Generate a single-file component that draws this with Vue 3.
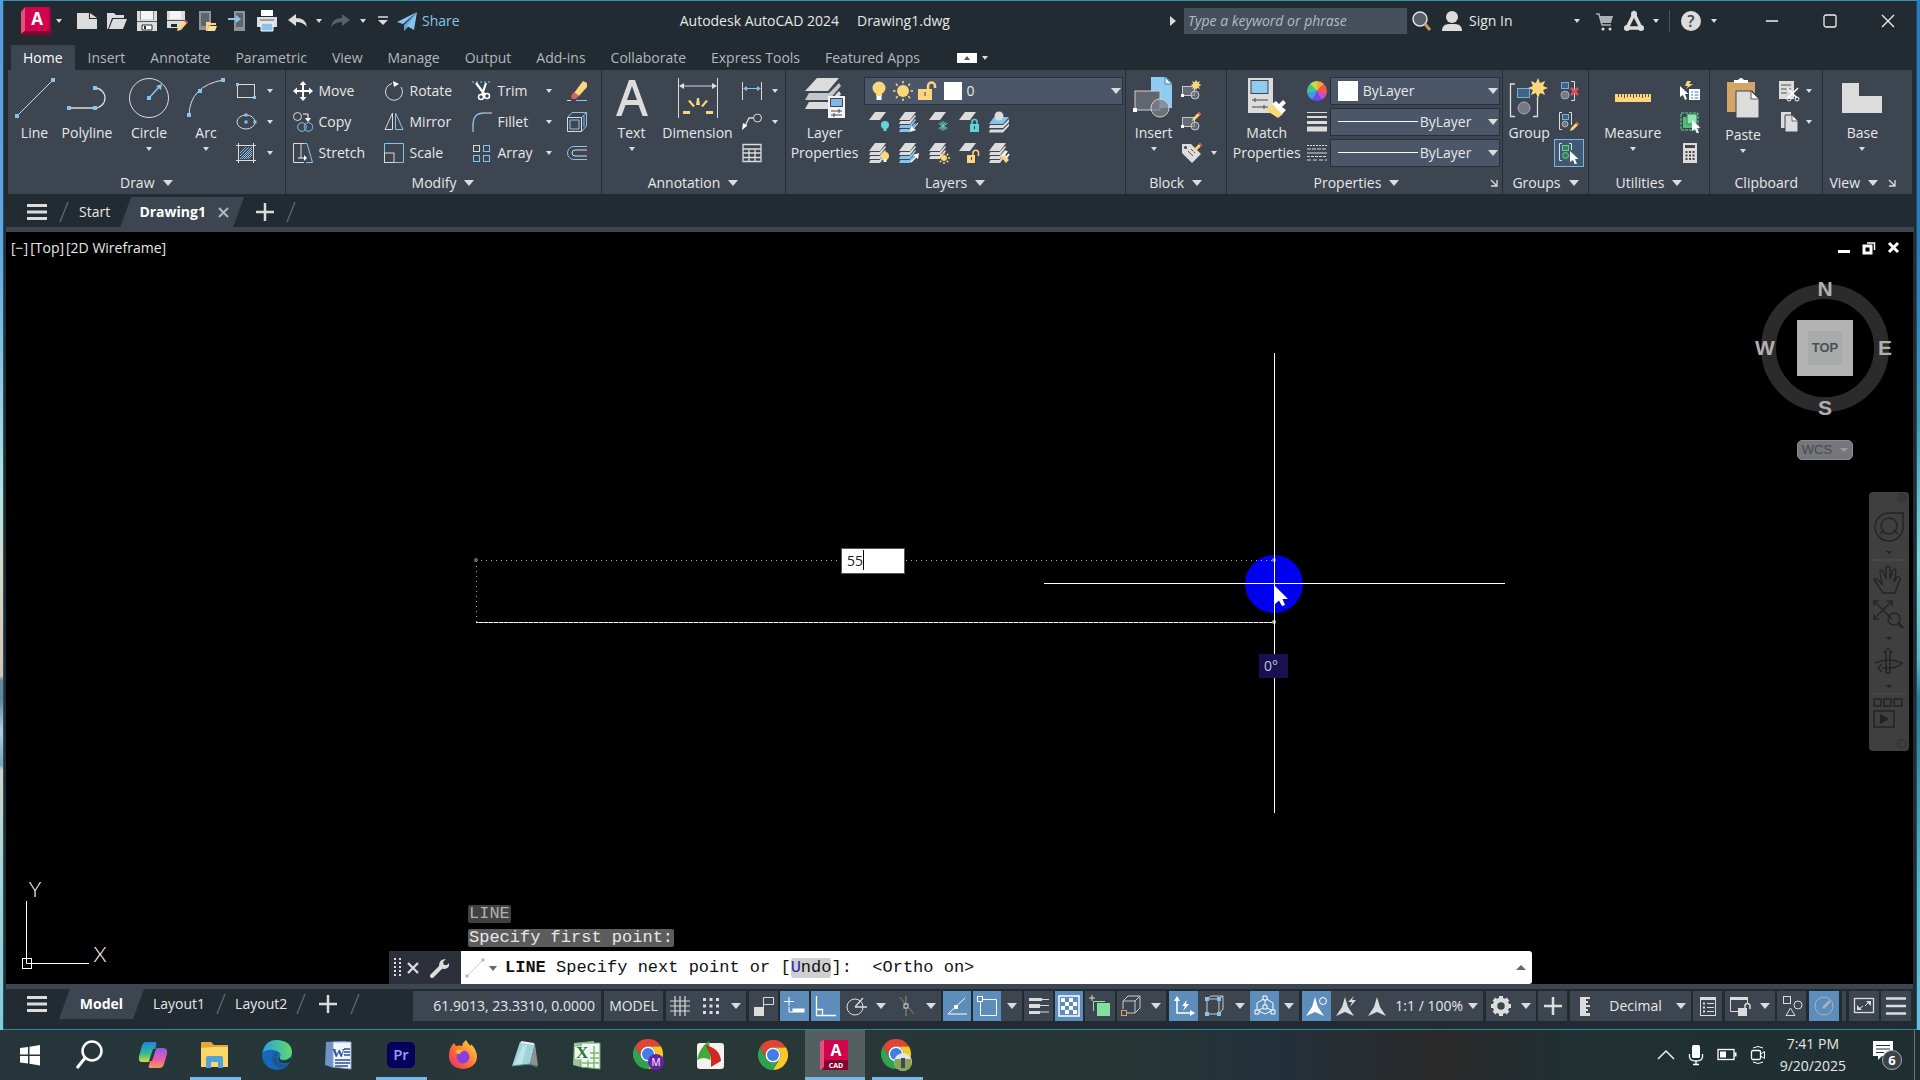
<script setup>
import { h } from 'vue'

const B = '#86c4ee'
const G = '#dcdcdc'
const Y = '#fbd67c'
const sheet = (c = G) => `<path d="M7 1H18L12 9H1Z" fill="${c}"/>`
const band = (y, c = G) => `<path d="M2.5 ${y}H11.5L17 ${y - 6}L18 ${y - 5}L12 ${y + 3}H1Z" fill="${c}"/>`
const dot = (x, y, s = 3) => `<rect x="${x - s / 2}" y="${y - s / 2}" width="${s}" height="${s}" fill="${B}"/>`
const bulb = (x, y, c) => `<circle cx="${x}" cy="${y}" r="4" fill="${c}"/><path d="M${x - 1.5} ${y + 3}h3v3h-3z" fill="${c === Y ? '#fff' : c}"/>`
const pencil = (x, y) => `<path d="M${x} ${y + 9}l1-3 5-5 2 2-5 5z" fill="${Y}"/><path d="M${x + 6} ${y + 1}l1-1 2 2-1 1z" fill="#d9534f" stroke="#d9534f"/>`
const star = (x, y, r, n = 8) => {
  let p = ''
  for (let i = 0; i < n * 2; i++) {
    const a = (Math.PI * i) / n
    const q = i % 2 ? r * 0.55 : r
    p += `${(x + q * Math.sin(a)).toFixed(1)},${(y - q * Math.cos(a)).toFixed(1)} `
  }
  return `<polygon points="${p}" fill="${Y}"/>`
}
const rays = (x, y, a, b) => {
  let p = ''
  for (let i = 0; i < 8; i++) {
    const t = (Math.PI * i) / 4
    p += `M${(x + a * Math.cos(t)).toFixed(1)} ${(y + a * Math.sin(t)).toFixed(1)}L${(x + b * Math.cos(t)).toFixed(1)} ${(y + b * Math.sin(t)).toFixed(1)}`
  }
  return `<path d="${p}" stroke="${Y}" stroke-width="1.5"/>`
}
const arrow = (x, y) => `<path d="M${x} ${y}v11l3-2 2 5 2-1-2-5h3.500z" fill="#fff"/>`
const chrome = `<path d="M2 7.500A15 15 0 0 1 28 7.500H15A7.500 7.500 0 0 0 8.500 18.750Z" fill="#e04437"/><path d="M28 7.500A15 15 0 0 1 15 30L21.500 18.750A7.500 7.500 0 0 0 15 7.500Z" fill="#fbc926"/><path d="M15 30A15 15 0 0 1 2 7.500L8.500 18.750A7.500 7.500 0 0 0 21.500 18.750Z" fill="#2fa350"/><circle cx="15" cy="15" r="7.500" fill="#fff"/><circle cx="15" cy="15" r="6" fill="#3f7de8"/>`
const block = `<rect x="1.500" y="6.500" width="12" height="9" fill="#666c76" stroke="#c9c9c9"/><circle cx="14" cy="15" r="4" fill="#777d86" fill-opacity=".6" stroke="#c9c9c9"/><path d="M0 14h3v3H0z" fill="#fff"/>`
const person = `<path d="M12 2L15 12L21 21L12 17L3 21L9 12Z" fill="${G}"/>`

const icons = {
  caret: [8, 4, `<path d="M1 0H7L4 4Z" fill="${G}"/>`],
  caretW: [8, 4, '<path d="M0 0H8L4 4Z" fill="#9a9aa0"/>'],
  caretL: [10, 6, `<path d="M0 0H10L5 6Z" fill="${G}"/>`],
  caretU: [10, 6, '<path d="M0 5H10L5 0Z" fill="#666"/>'],
  caretD: [8, 5, '<path d="M0 0H8L4 5Z" fill="#666"/>'],
  launch: [8, 8, `<path d="M1 1L6 6M7 1V7H1" stroke="${G}" stroke-width="1.300" fill="none"/>`],
  burger: [20, 16, `<path d="M0 0h20v3H0zM0 6.500h20v3H0zM0 13h20v3H0z" fill="${G}"/>`],
  slash: [10, 22, '<path d="M1 21L9 1" stroke="#5d6873" stroke-width="1.300"/>'],
  plus: [18, 18, `<path d="M9 0V18M0 9H18" stroke="${G}" stroke-width="2.500"/>`],
  x: [11, 11, '<path d="M1 1L10 10M10 1L1 10" stroke="#b4b8bc" stroke-width="2"/>'],
  logo: [30, 28, '<path d="M4 0H28V24H4Z" fill="#d0054c"/><path d="M0 5L4 0V24L0 27Z" fill="#e4517f"/><path d="M0 27L4 24H28L30 28H0Z" fill="#87042f"/><path d="M28 0L30 3V28L28 24Z" fill="#a00540"/><text x="16" y="18" font-family="Open Sans, sans-serif" font-size="17" font-weight="700" fill="#fff" text-anchor="middle">A</text>'],
  newf: [22, 22, `<path d="M1 3H13V9H21V19H1Z" fill="${G}"/><path d="M14 3L21 8H14Z" fill="${G}"/>`],
  open: [22, 22, `<path d="M1 19V3H8L10 5H18V8H6L2 19Z" fill="${G}"/><path d="M7 9H21L17 19H3Z" fill="${G}"/>`],
  save: [22, 22, `<path d="M1 1H21V21H1Z" fill="${G}"/><path d="M5 1H17V9H5Z" fill="#f5f5f5"/><path d="M1 11.500H21" stroke="#555"/><path d="M6 15h10v5H6z" fill="#fff" stroke="#222b31"/><path d="M8 16h2v3H8z" fill="#222b31"/><path d="M4.500 1V10M17.500 1V10" stroke="#888"/>`],
  saveas: [22, 22, `<path d="M1 1H19V12L12 18H1Z" fill="${G}"/><path d="M4 1H15V9H4Z" fill="#f5f5f5"/><path d="M1 10.500H19" stroke="#555"/><path d="M5 14h6v3H5z" fill="#222b31"/><path d="M11 21l1-4 7-6 2 2-6 7z" fill="${Y}"/><path d="M18 11l2-1 2 2-1 2z" fill="#d9534f"/>`],
  openw: [22, 22, `<path d="M3 1H15V20H3Z" fill="#8e959a"/><path d="M5 3H13V16H5Z" fill="#5d656c"/><path d="M10 12h4l1 1h5v2h-7l-2 6h-1z" fill="${Y}"/><path d="M13 16h8l-2 5h-8z" fill="#fbe2a2"/>`],
  savew: [22, 22, `<path d="M8 1H19V21H8Z" fill="#8e959a"/><path d="M10 3H17V17H10Z" fill="#5d656c"/><path d="M2 8H10V5L15 9L10 13V10H2Z" fill="${B}"/>`],
  print: [22, 22, `<path d="M5 0H17V6H5Z" fill="#fff"/><path d="M1 7H21V17H1Z" fill="${G}"/><path d="M4 10H18" stroke="#666"/><path d="M5 13H17V21H5Z" fill="${B}" stroke="#fff"/>`],
  undo: [22, 22, `<path d="M2 10L10 4V8Q20 8 21 17Q17 12 10 12V16Z" fill="${G}"/>`],
  redo: [22, 22, '<path d="M20 10L12 4V8Q2 8 1 17Q5 12 12 12V16Z" fill="#596066"/>'],
  custom: [12, 10, `<path d="M1 1H11" stroke="${G}" stroke-width="1.500"/><path d="M1 4H11L6 9Z" fill="${G}"/>`],
  plane: [22, 22, `<path d="M21 2L1 12L7 14Z" fill="${B}"/><path d="M21 2L8 15V21L12 17Z" fill="#5fa9da"/><path d="M21 2L11 16L18 20Z" fill="${B}"/>`],
  tri: [6, 10, `<path d="M0 0L6 5L0 10Z" fill="${G}"/>`],
  search: [22, 22, '<circle cx="9" cy="9" r="7" fill="#596069" stroke="#e0e0e0" stroke-width="1.500"/><path d="M14 14L19 20" stroke="#c9995f" stroke-width="3"/>'],
  user: [22, 22, `<circle cx="11" cy="7" r="6" fill="${G}"/><path d="M1 21Q1 14 8 14H14Q21 14 21 21Z" fill="${G}"/>`],
  cart: [20, 20, '<path d="M2 3H5L8 14H17" stroke="#aeb2b5" stroke-width="1.500" fill="none"/><path d="M5 5H19L17 12H7Z" fill="#aeb2b5"/><circle cx="9" cy="18" r="1.500" fill="#ddd"/><circle cx="16" cy="18" r="1.500" fill="#ddd"/>'],
  a360: [22, 22, `<path d="M11 4L4 18H18Z" fill="none" stroke="${G}" stroke-width="3.500"/><circle cx="11" cy="4" r="3" fill="${G}"/><circle cx="4" cy="18" r="3" fill="${G}"/><circle cx="18" cy="18" r="3" fill="${G}"/>`],
  help: [22, 22, `<circle cx="11" cy="11" r="10" fill="${G}"/><text x="11" y="17" font-family="Open Sans, sans-serif" font-weight="600" font-size="16" fill="#3a434b" text-anchor="middle">?</text>`],
  min: [14, 14, '<path d="M1 7H13" stroke="#f0f0f0" stroke-width="1.500"/>'],
  max: [14, 14, '<rect x="1" y="1" width="12" height="12" rx="2" fill="none" stroke="#f0f0f0" stroke-width="1.300"/>'],
  close: [14, 14, '<path d="M1 1L13 13M13 1L1 13" stroke="#f0f0f0" stroke-width="1.300"/>'],
  wbox: [20, 10, '<path d="M0 0H20V10H0Z" fill="#fff"/><path d="M7 7H13L10 3Z" fill="#555"/>'],
  // draw
  line: [40, 40, `<path d="M2 38L38 2" stroke="${G}"/>${dot(2, 38, 4)}${dot(38, 2, 4)}`],
  pline: [40, 40, `<path d="M2 30H28A10 10 0 0 0 28 10" fill="none" stroke="${G}" stroke-width="1.300"/>${dot(2, 30, 4)}${dot(28, 30, 4)}${dot(28, 10, 4)}`],
  circle: [40, 40, `<circle cx="20" cy="20" r="19.500" fill="none" stroke="${G}"/><path d="M20 20L30 9" stroke="${B}" stroke-width="1.500"/><path d="M33 6L32 12L27 8Z" fill="${B}"/>${dot(20, 20, 4)}`],
  arc: [40, 40, `<path d="M3 37Q4 8 37 2" fill="none" stroke="${G}"/>${dot(3, 37, 4)}${dot(14, 13, 4)}${dot(37, 2, 4)}`],
  rect: [22, 22, `<rect x="2.500" y="4.500" width="17" height="13" fill="none" stroke="${G}"/>${dot(2.5, 4.5)}${dot(19.5, 17.5)}`],
  ellipse: [22, 22, `<ellipse cx="11" cy="11" rx="9" ry="7" fill="none" stroke="${G}"/>${dot(11, 11)}${dot(11, 4)}${dot(20, 11)}`],
  hatch: [22, 22, `<path d="M3.500 1V21M18.500 1V21M1 3.500H21M1 18.500H21" stroke="${G}"/><path d="M5 11L11 5M5 17L17 5M9 17L17 9M13 17L17 13M5 14L14 5M7 17L17 7M11 17L17 11" stroke="${B}"/>`],
  // modify
  move: [20, 20, '<path d="M10 0L13.500 4H11V9H16V6.500L20 10L16 13.500V11H11V16H13.500L10 20L6.500 16H9V11H4V13.500L0 10L4 6.500V9H9V4H6.500Z" fill="#fff"/>'],
  copy: [20, 20, `<circle cx="4.500" cy="4.500" r="4" fill="none" stroke="${G}"/><path d="M10 2h5v5" fill="none" stroke="#fff"/><path d="M12 6h6l-3 4z" fill="#fff"/><circle cx="9" cy="15" r="4.300" fill="none" stroke="${B}"/><circle cx="15.500" cy="15" r="4.300" fill="none" stroke="${B}"/>`],
  stretch: [20, 20, `<path d="M11 .500H.500V19.500H11M8 .500V15" fill="none" stroke="${G}"/><path d="M11 .500H14L19.500 19.500H13" fill="none" stroke="${B}"/><path d="M5 15H12" stroke="#fff"/><path d="M11 12L14 15L11 18Z" fill="#fff"/>`],
  rotate: [20, 20, `<path d="M8 2.500A8.500 8.500 0 1 0 17 6" fill="none" stroke="${G}"/><path d="M9 0L15 3L10 6Z" fill="#fff"/>`],
  mirror: [20, 20, `<path d="M8.500 1V17.500H1Z" fill="none" stroke="${G}"/><path d="M11.500 1V17.500H19Z" fill="none" stroke="${B}"/>`],
  scale: [20, 20, `<path d="M.500 10V.500H19.500V19.500H10" fill="none" stroke="${B}"/><rect x=".500" y="10" width="9.500" height="9.500" fill="none" stroke="${G}"/>`],
  trim: [20, 20, `<path d="M0 1H20" stroke="${B}" stroke-dasharray="2 2"/><path d="M4 2L13 14M14 2L10 14" stroke="#fff" stroke-width="2.200"/><circle cx="9" cy="16" r="2.500" fill="none" stroke="#fff" stroke-width="1.500"/><circle cx="15" cy="15" r="2.500" fill="none" stroke="#fff" stroke-width="1.500"/>`],
  fillet: [20, 20, `<path d="M1 20V12" stroke="${G}"/><path d="M1 13Q1 1 12 1" fill="none" stroke="${B}" stroke-width="1.300"/><path d="M12 1H20" stroke="${G}"/>`],
  array: [20, 20, `<rect x="1.500" y="2.500" width="6" height="6" fill="none" stroke="${G}"/><g fill="none" stroke="${B}"><rect x="11.500" y="2.500" width="6" height="6"/><rect x="1.500" y="12.500" width="6" height="6"/><rect x="11.500" y="12.500" width="6" height="6"/></g>`],
  erase: [22, 22, `<path d="M8 13L17 1L21 3V7L13 16Z" fill="${Y}"/><path d="M5 16L8 12L13 16L10 19H6Z" fill="#e05c5c"/><path d="M1 20.500H5" stroke="${G}"/><path d="M10 20.500H21" stroke="${B}"/>`],
  explode: [22, 22, `<path d="M1.500 6.500H15.500V20.500H1.500Z" fill="none" stroke="${G}"/><path d="M1.500 6.500L6 1.500H20.500L15.500 6.500M20.500 1.500V15L15.500 20.500M4 9H13V18H4ZM18 5V16" fill="none" stroke="${B}"/>`],
  offset: [22, 22, `<path d="M21 4.500H8A6.500 6.500 0 0 0 8 17.500H21" fill="none" stroke="${B}"/><path d="M21 8H9A3 3 0 0 0 9 14H21" fill="none" stroke="${G}"/>`],
  // annotation
  text: [40, 40, `<path d="M4 38L17 2H23L36 38H30.500L26.500 27H13.500L9.500 38ZM15 22H25L20 8Z" fill="${G}"/>`],
  dim: [40, 40, `<path d="M.500 0V40M39.500 0V40M2 8H38" stroke="${G}" fill="none"/><path d="M1 8L6 5V11ZM39 8L34 5V11Z" fill="${G}"/><path d="M19 20h2l1 7h-4zM10 23l2-1 5 6-2 1zM30 23l-2-1-5 6 2 1zM5 33l7 0 0 3-7 0zM35 33l-7 0 0 3 7 0z" fill="${Y}"/>`],
  linear: [22, 22, `<path d="M1.500 2V20M20.500 2V20" stroke="${G}"/><path d="M3 8.500H19" stroke="${B}"/><path d="M2 8.500L6 6V11ZM20 8.500L16 6V11Z" fill="${B}"/>`],
  leader: [22, 22, `<circle cx="16.500" cy="7" r="4" fill="none" stroke="${G}"/><path d="M12.500 7H8L4 15" fill="none" stroke="${G}" stroke-width="1.300"/><path d="M1 19L2 12L6.500 14.500Z" fill="#fff"/>`],
  table: [22, 22, `<path d="M2 2.500H20V19.500H2ZM2 7H20M2 11H20M2 15.500H20M8 7V19.500M14 7V19.500" fill="none" stroke="${G}" stroke-width="1.300"/>`],
  // layers
  layerp: [40, 40, `<path d="M12 0H34L23 13H0Z" fill="${G}"/><path d="M4 15H24L34 5L36 8L24 22H0Z" fill="#c4c7ca"/><path d="M4 24H24L34 13L36 16L24 31H0Z" fill="${G}"/><path d="M23 18H40V40H23Z" fill="#f4f4f4"/><path d="M25.500 20.500H37.500V28.500H25.500Z" fill="#7db9e8" stroke="#444"/><path d="M26 33H37M26 37H37M34 31V35M29 35V39" stroke="#444"/>`],
  bulb: [22, 22, `<circle cx="11" cy="8" r="6.500" fill="${Y}"/><path d="M8 14H14V16H8Z" fill="${Y}"/><path d="M8.500 16H13.500V20H8.500Z" fill="#fff"/>`],
  sun: [22, 22, `<circle cx="11" cy="11" r="6" fill="${Y}"/>${rays(11, 11, 7.5, 10)}`],
  unlock: [22, 22, `<path d="M2 9H16V20H2Z" fill="${Y}"/><path d="M12 9V6A3.500 3.500 0 0 1 19 6V8" fill="none" stroke="${Y}" stroke-width="2.500"/><path d="M8.500 12H9.500V16H8.500Z" fill="#444"/>`],
  l1: [22, 22, sheet() + bulb(17, 14, '#5fd3d6')],
  l2: [22, 22, sheet() + band(10) + band(14, B) + band(18, B) + '<path d="M20 12L15 18" stroke="#fff"/><path d="M12 21L13 15L18 19Z" fill="#fff"/>'],
  l3: [22, 22, sheet() + '<path d="M15 10V20M10.500 12.500L19.500 17.500M10.500 17.500L19.500 12.500M12.500 11L17.500 19M17.500 11L12.500 19" stroke="#5fd3b8"/>'],
  l4: [22, 22, sheet() + '<path d="M12 13H21V21H12Z" fill="#5fd3d6"/><path d="M14 13V11A2.500 2.500 0 0 1 19 11V13" fill="none" stroke="#5fd3d6" stroke-width="1.500"/><path d="M16 15h1v3h-1z" fill="#344"/>'],
  l5: [22, 22, `<path d="M6 6H21L15 13H1Z" fill="${B}"/><circle cx="11" cy="5" r="4.500" fill="${G}"/>${`<path d="M2 14H15L21 8V11L15 17H1ZM2 18.500H15L21 12.500V15L15 21.500H1Z" fill="${G}"/>`}`],
  l6: [22, 22, sheet() + band(10) + band(14) + band(18) + bulb(17, 14, Y)],
  l7: [22, 22, sheet() + band(10) + band(14, B) + band(18, B) + '<path d="M13 20L19 14" stroke="#fff" stroke-width="1.500"/><path d="M21 11L20 17L15 13Z" fill="#fff"/>'],
  l8: [22, 22, sheet() + band(10) + band(14) + `<circle cx="16" cy="16" r="3" fill="${Y}"/>${rays(16, 16, 4, 6)}`],
  l9: [22, 22, sheet() + `<path d="M9 13H17V21H9Z" fill="${Y}"/><path d="M15 13V11A2.500 2.500 0 0 1 20.500 11V14" fill="none" stroke="${Y}" stroke-width="1.500"/><path d="M13 15h1v3h-1z" fill="#444"/>`],
  l10: [22, 22, sheet() + band(10) + band(14) + band(18) + `<path d="M12 14L16 12L21 18L18 21Z" fill="${Y}"/><path d="M15 14L19 9M18 16L21 12" stroke="#fff" stroke-width="2"/>`],
  // block
  insert: [42, 42, `<path d="M18 0H33L39 6V31H18Z" fill="#8fcbf2"/><path d="M32 0V7H39Z" fill="#e8f4fc" stroke="#4a7fa5"/><rect x="2" y="14" width="25" height="19" fill="#62666e" stroke="#cfcfcf"/><circle cx="27" cy="31" r="9" fill="#7c8088" fill-opacity=".75" stroke="#cfcfcf"/><path d="M0 31h4v4H0z" fill="#fff"/>`],
  blk1: [22, 22, block + star(15, 5, 5.5)],
  blk2: [22, 22, block + pencil(11, 1)],
  blk3: [22, 22, `<path d="M1 2H10L20 12L11 21L1 11Z" fill="${G}"/><circle cx="4.500" cy="5.500" r="1.500" fill="#3c4450"/><path d="M7 9l5 5M10 7l4 4" stroke="#555"/>${pencil(12, 1)}`],
  // properties
  match: [42, 40, `<path d="M2 0H27V35H2Z" fill="${G}"/><rect x="5" y="2.500" width="17" height="13" fill="#8fcbf2" stroke="#444"/><path d="M6 22H22M6 29H22M9 20V24M18 27V31" stroke="#444"/><path d="M20 32L26 26L37 36L32 40Z" fill="${Y}"/><path d="M26 26L30 23L33 26L37 22L40 25L36 29L40 32L36 36Z" fill="#fff"/>`],
  lw: [22, 22, `<path d="M1 1.500H21" stroke="${G}"/><path d="M1 6H21" stroke="${G}" stroke-width="2"/><path d="M1 11.500H21" stroke="${G}" stroke-width="3"/><path d="M1 18H21" stroke="${G}" stroke-width="5"/>`],
  lt: [22, 22, `<path d="M1 3.500H21" stroke="${G}" stroke-dasharray="2 1"/><path d="M1 7H21" stroke="${G}" stroke-dasharray="4 1"/><path d="M1 11H21" stroke="${G}"/><path d="M1 14.500H21" stroke="${G}" stroke-dasharray="3 1"/><path d="M1 18H21" stroke="${G}" stroke-dasharray="4 2"/>`],
  // groups
  group: [42, 42, `<path d="M7 7H2.500V39.500H7M25 39.500H29.500V20" fill="none" stroke="${G}" stroke-width="1.300"/><rect x="9.500" y="11.500" width="12" height="9" fill="#3f6583" stroke="#6fb2df"/><circle cx="16" cy="31" r="6" fill="#747a83" stroke="#aab"/>${star(30, 11, 10)}`],
  grp1: [22, 22, '<rect x="3.500" y="2.500" width="7" height="6" fill="#3f6583" stroke="#6fb2df"/><circle cx="7" cy="15" r="4" fill="#747a83" stroke="#aab"/><path d="M13 1.500H16.500V20.500H13" fill="none" stroke="#ddd"/><path d="M13 8L20 15M20 8L13 15" stroke="#e0505e" stroke-width="2.500"/>'],
  grp2: [22, 22, `<path d="M4 1.500H1.500V18.500H4M11 1.500H13.500V14" fill="none" stroke="#ddd"/><rect x="4.500" y="3.500" width="6" height="5" fill="#3f6583" stroke="#6fb2df"/><circle cx="7" cy="13" r="3" fill="#747a83" stroke="#aab"/>${pencil(12, 11)}`],
  grp3: [22, 22, `<path d="M4 1.500H1.500V18.500H4M11 1.500H13.500V8" fill="none" stroke="#ddd"/><rect x="4.500" y="3.500" width="6" height="5" fill="#3d7b5d" stroke="#5fd08a"/><circle cx="7.500" cy="13.500" r="3" fill="#3d7b5d" stroke="#5fd08a"/>${arrow(12, 9)}`],
  // utilities, clipboard, view
  measure: [40, 40, `<path d="M2 16H38V24H2Z" fill="${Y}"/><path d="M5.500 16v3M8.500 16v3M11.500 16v4M14.500 16v3M17.500 16v3M20.500 16v4M23.500 16v3M26.500 16v3M29.500 16v4M32.500 16v3M35.500 16v3" stroke="#55534a"/>`],
  ut1: [22, 22, `<path d="M8 1H12L10 4H14L7 9L9 6H6Z" fill="${Y}"/><path d="M10 9H21V20H10Z" fill="#fff"/><path d="M12 12h2M12 15h2M12 18h2M15.500 12h4M15.500 15h4M15.500 18h4" stroke="#3a7bd0"/>${arrow(1, 6)}`],
  ut2: [22, 22, `<rect x="2" y="2" width="17" height="17" fill="none" stroke="#5fe08c" stroke-dasharray="3 1"/><path d="M4 6H15V17H4Z" fill="#58b97c"/><path d="M8 3H18V13H8Z" fill="#8fe9ac" stroke="#3d7b5d"/>${arrow(13, 9)}`],
  ut3: [22, 22, `<path d="M4 1H18V21H4Z" fill="${G}"/><path d="M6 3H16V6H6Z" fill="#444"/><path d="M6.500 10H16M6.500 13.500H16M6.500 17H16" stroke="#444" stroke-width="2" stroke-dasharray="2 1.500"/>`],
  paste: [40, 42, `<path d="M4 4H32V34H4Z" fill="#d3a567"/><path d="M11 4V2H15Q18 -2 21 2H25V5H11Z" fill="#fff"/><path d="M13 13H29L36 20V40H13Z" fill="${G}" stroke="#3c4450"/><path d="M28 13V21H36Z" fill="#fff" stroke="#555"/>`],
  cut: [22, 22, `<path d="M1 1H16V19H1Z" fill="${G}"/><path d="M3 5H13M3 9H13M3 13H9" stroke="#555"/><path d="M9 8L19 18M20 8L10 18" stroke="#fff" stroke-width="1.500"/><circle cx="11" cy="19" r="2" fill="none" stroke="#fff"/><circle cx="19" cy="19" r="2" fill="none" stroke="#fff"/>`],
  copyc: [22, 22, `<path d="M3 1H13V17H3Z" fill="${G}"/><path d="M7 4H15L20 9V21H7Z" fill="${G}" stroke="#3c4450"/><path d="M14 4V10H20Z" fill="#fff" stroke="#666"/>`],
  base: [40, 40, `<path d="M0 5H17V18H40V35H0Z" fill="${G}"/>`],
  // canvas
  wmin: [14, 14, '<path d="M1 9H13V12H1Z" fill="#fff"/>'],
  wres: [14, 14, '<path d="M5 2H12.500V9" fill="none" stroke="#fff" stroke-width="1.500"/><rect x="2" y="5" width="7" height="7" fill="none" stroke="#fff" stroke-width="3"/>'],
  wx: [14, 14, '<path d="M2 2L11 11M11 2L2 11" stroke="#fff" stroke-width="3"/>'],
  nav: [40, 259, '<g fill="none" stroke="#252525" stroke-width="1.500"><circle cx="33" cy="6" r="4" stroke="#333"/><path d="M31 4l4 4M35 4l-4 4" stroke="#333"/><path d="M20 21H34V35A14 14 0 1 1 20 21Z"/><circle cx="20" cy="34" r="8"/><path d="M15 38l-4 4M25 38l4 4"/><path d="M6 89q-2-3 2-2l5 5-2-12q1-3 3-1l3 8V76q2-3 4 0v11l3-9q3-2 3 1l-2 11 3-5q3-1 3 2L26 101H14Z"/><path d="M5 109L23 127M23 109L5 127M5 114v-5h5M18 109h5v5M5 122v5h5"/><circle cx="25" cy="127" r="6"/><path d="M29 131l5 5" stroke-width="3"/><path d="M17 181V160h-2l4-4 4 4h-2v21z"/><path d="M6 171q14-6 27 0-4 6-20 5M13 172l-4 4 4 4"/><path d="M5 207h7v7H5zM15 207h7v7h-7zM25 207h8v7h-8zM5 219H25V235H5Z"/><circle cx="33" cy="252" r="4" stroke="#333"/></g><path d="M11 222L20 227L11 232ZM17 59h6l-3 3zM17 145h6l-3 3zM17 193h6l-3 3z" fill="#222"/><path d="M3 68H37M3 202H37" stroke="#505050"/>'],
  grip: [8, 22, '<path d="M1 1V21M6 1V21" stroke="#ddd" stroke-width="2" stroke-dasharray="2 2"/>'],
  cx: [12, 12, '<path d="M1 1L11 11M11 1L1 11" stroke="#ddd" stroke-width="2.300"/>'],
  wrench: [20, 20, '<path d="M2 18L11 9" stroke="#ddd" stroke-width="4" stroke-linecap="round"/><path d="M16 1L13 4L14 7L17 7L19 5Q20 11 13 11L9 8Q9 1 16 1Z" fill="#ddd"/>'],
  cline: [20, 20, `<path d="M2 18L18 2" stroke="#ccc"/>${dot(2, 18)}${dot(18, 2)}`],
  // status
  grid: [22, 22, `<path d="M6 1V21M11 1V21M16 1V21M1 6H21M1 11H21M1 16H21" stroke="${G}" stroke-width="1.200"/>`],
  dots: [22, 22, `<path d="M4 4.500H20M4 11H20M4 17.500H20" stroke="${G}" stroke-width="3" stroke-dasharray="3 3.500"/>`],
  infer: [22, 22, `<path d="M1 12H11V21H1Z" fill="${G}"/><path d="M10.500 12V2.500H20.500V9.500H11" fill="none" stroke="${G}"/>`],
  dyn: [24, 22, '<path d="M6 2V11M1 6.500H11M6 12V17H10" stroke="#fff" fill="none"/><rect x="9.500" y="13.500" width="12" height="4" fill="#fff"/>'],
  ortho: [22, 22, '<path d="M1.500 1V20.500H21M1.500 14.500H7.500V20.500" fill="none" stroke="#fff" stroke-width="1.300"/>'],
  polar: [22, 22, `<circle cx="10" cy="12" r="8" fill="none" stroke="${G}"/><path d="M10 12L18 3M10 12H22" stroke="${G}" stroke-width="1.300"/>`],
  iso: [22, 22, '<path d="M5 2L11 10M14 13L19 19" stroke="#d0685f"/><path d="M11 1V9M11 13V21" stroke="#6fa76f"/><rect x="9" y="9" width="4" height="4" fill="none" stroke="#ddd"/>'],
  otrack: [22, 22, '<path d="M2 19L19 3M2 19H21" stroke="#fff"/><rect x="8" y="10" width="4" height="4" fill="#fff"/>'],
  osnap: [22, 22, '<path d="M7 4.500H20.500V20.500H4.500V7" fill="none" stroke="#fff"/><rect x="1.500" y="1.500" width="5" height="5" fill="none" stroke="#fff"/>'],
  lwt: [22, 22, `<path d="M12 4.500H21M12 10.500H21M12 17H21" stroke="${G}" stroke-width="1"/><path d="M1 4.500H14M1 17.500H12" stroke="${G}" stroke-width="3"/><path d="M1 11H12" stroke="${G}" stroke-width="4"/>`],
  transp: [22, 22, '<rect x="1" y="1" width="20" height="20" fill="none" stroke="#fff" stroke-width="1.500"/><path d="M3 5H19M3 13H19" stroke="#fff" stroke-width="4" stroke-dasharray="4 4"/><path d="M7 9H19M7 17H19" stroke="#fff" stroke-width="4" stroke-dasharray="4 4"/>'],
  selc: [22, 22, '<path d="M3 0V6M0 3H6" stroke="#ddd"/><path d="M4.500 16V6.500H16" fill="none" stroke="#8de5ac"/><path d="M8 8H21V21H8Z" fill="#83df9f"/>'],
  osn3: [22, 22, '<path d="M3 14V6H15V18H7M3 6L8 1H20V13L15 18M15 6L20 1" fill="none" stroke="#ccc"/><rect x="1.500" y="15.500" width="5" height="5" fill="#3c4450" stroke="#d6a875"/>'],
  ducs: [22, 22, '<path d="M4 4V18H18" fill="none" stroke="#fff" stroke-width="1.500"/><path d="M1 6L4 1L7 6ZM17 15L22 18L17 21Z" fill="#fff"/><path d="M14 5L9 11H12L10 16L16 9H13Z" fill="#fff"/>'],
  filt: [22, 22, `<path d="M4 19V4L8 1H20V14L16 19ZM4 4H16L20 1M16 4V19" fill="none" stroke="#ccc"/>${dot(4, 4, 4)}${dot(16, 4, 4)}${dot(4, 19, 4)}${dot(16, 19, 4)}`],
  giz: [22, 22, '<path d="M11 3L19 8V15L11 19L3 15V8ZM11 3V12M11 12L3 16M11 12L19 16" fill="none" stroke="#fff"/><path d="M9 1h4v4H9zM1 15h4v4H1zM17 15h4v4h-4zM9 10h4v4H9z" fill="#5d8ebb" stroke="#fff"/>'],
  an1: [24, 22, '<path d="M10 2L13 12L19 21L10 17L1 21L7 12Z" fill="#fff"/><circle cx="18" cy="6" r="3.500" fill="none" stroke="#fff"/>'],
  an2: [24, 22, `<path d="M10 2L13 12L19 21L10 17L1 21L7 12Z" fill="${G}"/><path d="M19 1L13 7H17L15 12L21 5H17Z" fill="${G}"/>`],
  an3: [24, 22, person],
  gear: [22, 22, `<circle cx="11" cy="11" r="6" fill="none" stroke="${G}" stroke-width="4.500"/><path d="M11 1V4M11 18V21M1 11H4M18 11H21M4 4L6 6M16 16L18 18M18 4L16 6M4 18L6 16" stroke="${G}" stroke-width="4"/>`],
  ruler: [22, 22, `<path d="M6 2H16V4H12V6H14V8H12V10H16V12H12V14H14V16H12V18H16V21H6Z" fill="${G}"/>`],
  qp: [22, 22, `<rect x="3.500" y="2.500" width="15" height="18" fill="none" stroke="${G}"/><path d="M3 4H19" stroke="${G}" stroke-width="2"/><path d="M6 8.500H8M6 12.500H8M6 16.500H8" stroke="${G}" stroke-width="2"/><path d="M10 8.500H17M10 12.500H17M10 16.500H17" stroke="${G}"/>`],
  lockui: [22, 22, `<path d="M10 16.500H1.500V2.500H18.500V9" fill="none" stroke="${G}"/><path d="M1 3.500H19" stroke="${G}" stroke-width="3"/><path d="M9 13H18V21H9Z" fill="${G}"/><path d="M16 13V11A2.500 2.500 0 0 1 21 11V14" fill="none" stroke="${G}" stroke-width="1.500"/>`],
  iso2: [22, 22, `<rect x="2.500" y="1.500" width="7" height="7" fill="none" stroke="${G}"/><circle cx="17" cy="10" r="4" fill="none" stroke="${G}"/><path d="M9.500 13L14 20.500H5Z" fill="none" stroke="${G}"/>`],
  hw: [22, 22, '<circle cx="11" cy="11" r="9" fill="none" stroke="#a5b5c3"/><path d="M10 13L17 6" stroke="#a5b5c3" stroke-width="2.500"/>'],
  clean: [22, 22, `<rect x="1.500" y="3.500" width="19" height="14" fill="none" stroke="${G}" stroke-width="1.300"/><path d="M13 6h5v5zM4 10v5h5z" fill="${G}"/><path d="M12 11L16 7M6 14L10 11" stroke="${G}"/>`],
  menu: [22, 22, `<path d="M1 3.500H21M1 11H21M1 18.500H21" stroke="${G}" stroke-width="2.500"/>`],
  // taskbar
  win: [22, 22, '<path d="M1 4L9 3V10.500H1ZM10.500 2.700L21 1V10.500H10.500ZM1 12H9V19.500L1 18.500ZM10.500 12H21V21.500L10.500 19.700Z" fill="#fff"/>'],
  find: [30, 30, '<circle cx="16" cy="11" r="9.500" fill="none" stroke="#fff" stroke-width="2.500"/><path d="M9 18L1 28" stroke="#fff" stroke-width="3"/>'],
  copilot: [30, 28, '<defs><linearGradient id="ca" x1="0" y1="0" x2="0" y2="1"><stop offset="0" stop-color="#2580e8"/><stop offset=".6" stop-color="#32c08c"/><stop offset="1" stop-color="#e8d33f"/></linearGradient><linearGradient id="cb" x1="0" y1="0" x2="0" y2="1"><stop offset="0" stop-color="#8b5cf0"/><stop offset=".6" stop-color="#ef5f9e"/><stop offset="1" stop-color="#f79b52"/></linearGradient></defs><path d="M8 1H17Q19 1 18 5L14 18Q13 21 9 21H4Q0 21 1 15L4 5Q5 1 8 1Z" fill="url(#ca)"/><path d="M21 7H25Q30 7 29 13L26 23Q25 27 21 27H12Q10 27 11 24L16 10Q17 7 21 7Z" fill="url(#cb)"/><path d="M15 8L18 8L14 20L11 20Z" fill="#27363a"/>'],
  folder: [30, 28, '<path d="M1 2Q1 1 2 1H11L14 4H28V26H1Z" fill="#e5a83a"/><path d="M1 7L13 6H28V26H1Z" fill="#fbd768"/><path d="M6 27V17Q6 15 8 15H21Q23 15 23 17V27H18V21H11V27Z" fill="#4fa3d8"/>'],
  edge: [30, 30, '<defs><linearGradient id="ea" x1="0" y1="0" x2="1" y2="0"><stop offset="0" stop-color="#2f9fd6"/><stop offset="1" stop-color="#5fdc6a"/></linearGradient></defs><circle cx="15" cy="15" r="15" fill="#1668bd"/><path d="M1 12Q3 0 15 0Q30 1 30 13Q29 20 21 20Q17 20 18 17Q20 13 15 11Q7 8 1 12Z" fill="url(#ea)"/><path d="M12 13Q7 22 15 27Q21 30 27 24Q20 26 16 21Q13 17 17 12Z" fill="#27363a" fill-opacity=".35"/><path d="M18 17Q17 20 21 20.500Q26 20.500 29 17L30 22Q24 24 20 23Q14 20 18 17Z" fill="#27363a"/>'],
  word: [30, 30, '<path d="M2 2L22 1V4H10V28L1 25Z" fill="#6f93c9"/><path d="M9 2H27V29L9 27Z" fill="#f2f5fa" stroke="#8ba7d2"/><path d="M20 9H26M20 12H26M20 15H26M11 20H26M11 23H26M11 26H24" stroke="#2a4f97" stroke-width="1.500"/><text x="8" y="17" font-family="Liberation Serif, serif" font-weight="700" font-size="13" fill="#2a4f97">W</text>'],
  pr: [30, 28, '<rect x="1" y="1" width="28" height="26" rx="5" fill="#06005c"/><text x="15" y="19" font-family="Open Sans, sans-serif" font-weight="600" font-size="15" fill="#9d9bff" text-anchor="middle">Pr</text>'],
  ff: [30, 30, '<defs><linearGradient id="fa" x1="1" y1="0" x2="0" y2="1"><stop offset="0" stop-color="#ffe24a"/><stop offset=".5" stop-color="#ff7a2f"/><stop offset="1" stop-color="#e8266f"/></linearGradient></defs><path d="M2 9Q4 5 6 3L8 6Q11 5 14 6Q15 2 18 0Q20 4 23 6V4Q29 10 29 17Q28 28 15 29Q2 28 1 17Q1 12 2 9Z" fill="url(#fa)"/><circle cx="15" cy="17" r="6.500" fill="#8a3ee0"/><path d="M7 11Q12 8 16 11Q12 12 12 14Q8 14 7 11Z" fill="#ffb43a"/>'],
  note: [30, 28, '<path d="M10 1L25 3L20 23L2 25Z" fill="#9fd2da"/><path d="M25 3L28 25L20 23Z" fill="#8b9590"/><path d="M11 1L24 3" stroke="#eee" stroke-width="2"/><path d="M2 25L20 23L27 26" stroke="#5f8f98" fill="none"/><path d="M13 4L17 4L12 23L4 24Z" fill="#d4eef0" fill-opacity=".6"/>'],
  excel: [30, 30, '<path d="M2 3L22 1V4H12V28L1 25Z" fill="#9cc49a"/><path d="M9 3H28V29L9 27Z" fill="#f1f7ee" stroke="#6fa767"/><path d="M10 13H27M10 18H27M10 23H27M16 6V28M22 6V28" stroke="#7fb877" stroke-width="1.500"/><path d="M3 7L18 5V20L3 19Z" fill="#f1f7ee"/><text x="4" y="18" font-family="Liberation Serif, serif" font-weight="700" font-size="17" fill="#1f7a37">X</text>'],
  chm: [32, 32, `${chrome}<circle cx="23" cy="23" r="8" fill="#6a1fa8"/><text x="23" y="27" font-family="Open Sans, sans-serif" font-size="10" fill="#fff" text-anchor="middle">M</text>`],
  fs: [30, 30, '<rect x="1" y="3" width="27" height="26" rx="3" fill="#f4f2ee"/><path d="M1 20Q3 8 13 1Q14 10 14 20Q8 16 1 20Z" fill="#3faa3a"/><path d="M9 5Q24 8 25 21L15 27Q16 14 9 5Z" fill="#cc2a22"/>'],
  ch: [30, 30, chrome],
  cad: [30, 32, '<path d="M0 3L4 1V28L0 31Z" fill="#e4517f"/><path d="M4 1H28V22H4Z" fill="#d0054c"/><path d="M4 21H28V31H2L4 28Z" fill="#87042f"/><text x="16" y="17" font-family="Open Sans, sans-serif" font-size="16" font-weight="700" fill="#fff" text-anchor="middle">A</text><text x="16" y="29" font-family="Open Sans, sans-serif" font-size="7" font-weight="700" fill="#fff" text-anchor="middle">CAD</text>'],
  chp: [32, 32, `${chrome}<circle cx="22" cy="23" r="9" fill="#dfe5e6"/><path d="M14 20H30Q32 26 28 30Q22 34 15 29Q12 25 14 20Z" fill="#8aa552"/><path d="M20 19h4v10h-4z" fill="#3d4663"/>`],
  up: [18, 12, '<path d="M1 10L9 2L17 10" fill="none" stroke="#eee" stroke-width="1.500"/>'],
  mic: [16, 22, '<rect x="4" y="1" width="8" height="13" rx="1.500" fill="#fff"/><path d="M1.500 10V13Q2 17 8 17Q14 17 14.500 13V10M8 17V20M5 20.500H11" fill="none" stroke="#fff" stroke-width="1.300"/>'],
  bat: [20, 14, '<rect x="1" y="1.500" width="16" height="10" fill="none" stroke="#fff" stroke-width="1.300"/><path d="M3 3.500H9V9.500H3ZM17.500 4.500H19.500V8.500H17.500Z" fill="#fff"/>'],
  meet: [16, 20, '<path d="M3 3Q8 0 13 3M3 17Q8 20 13 17" fill="none" stroke="#fff"/><rect x="1.500" y="5.500" width="9" height="9" rx="1.500" fill="none" stroke="#fff" stroke-width="1.300"/><path d="M10.500 9L14.500 6.500V13.500L10.500 11Z" fill="none" stroke="#fff"/>'],
  notif: [32, 32, '<path d="M1 2H21V17H10L6 21V17H1Z" fill="#fff"/><path d="M4 6.500H18M4 10H18M4 13.500H12" stroke="#223135"/><circle cx="20" cy="21" r="9.500" fill="#3b4346" stroke="#aab"/><text x="20" y="26" font-family="Open Sans, sans-serif" font-weight="700" font-size="13" fill="#fff" text-anchor="middle">6</text>'],
}
const Ic = (p) => {
  const [w, ht, m] = icons[p.n]
  return h('svg', { class: 'ic', width: w, height: ht, viewBox: `0 0 ${w} ${ht}`, fill: 'none', 'aria-hidden': 'true', innerHTML: m })
}
Ic.props = ['n']

const quick = ['newf', 'open', 'save', 'saveas', 'openw', 'savew', 'print', 'undo']
const tabs = ['Home', 'Insert', 'Annotate', 'Parametric', 'View', 'Manage', 'Output', 'Add-ins', 'Collaborate', 'Express Tools', 'Featured Apps']
const modify = [
  ['Move', 'move'], ['Rotate', 'rotate'], ['Trim', 'trim', 1],
  ['Copy', 'copy'], ['Mirror', 'mirror'], ['Fillet', 'fillet', 1],
  ['Stretch', 'stretch'], ['Scale', 'scale'], ['Array', 'array', 1],
]
const side = ['erase', 'explode', 'offset']
const status = [
  [{ t: '61.9013, 23.3310, 0.0000', w: 188, r: 1 }],
  [{ t: 'MODEL', w: 59 }],
  [{ i: 'grid', w: 28 }, { i: 'dots', w: 31 }, { c: 1, w: 21 }],
  [{ i: 'infer', w: 29 }, { i: 'dyn', w: 29, on: 1, s: 1 }, { i: 'ortho', w: 29, on: 1, s: 1 }, { i: 'polar', w: 31 }, { c: 1, w: 20 }, { i: 'iso', w: 30 }, { c: 1, w: 20 },
    { i: 'otrack', w: 28, on: 1, s: 1 }, { i: 'osnap', w: 28, on: 1, s: 1 }, { c: 1, w: 21 }, { i: 'lwt', w: 29, s: 1 }, { i: 'transp', w: 28, on: 1, s: 1 }, { i: 'selc', w: 30, s: 1 }, { i: 'osn3', w: 28, s: 1 }, { c: 1, w: 21 }],
  [{ i: 'ducs', w: 29, on: 1 }, { i: 'filt', w: 31 }, { c: 1, w: 21 }, { i: 'giz', w: 29, on: 1 }, { c: 1, w: 20 }],
  [{ i: 'an1', w: 29, on: 1 }, { i: 'an2', w: 31 }, { i: 'an3', w: 30 }, { t: '1:1 / 100%', w: 71, e: 1 }, { c: 1, w: 20 }],
  [{ i: 'gear', w: 30 }, { c: 1, w: 20 }, { i: 'plus', w: 29, s: 1 }],
  [{ i: 'ruler', w: 30 }, { t: 'Decimal', w: 71 }, { c: 1, w: 20 }, { i: 'qp', w: 29, s: 1 }],
  [{ i: 'lockui', w: 30 }, { c: 1, w: 20 }, { i: 'iso2', w: 29, s: 1 }],
  [{ i: 'hw', w: 30, on: 1 }],
  [{ w: 4 }],
  [{ i: 'clean', w: 30 }, { i: 'menu', w: 30, s: 1 }],
]
const apps = ['win', 'find', 'copilot', 'folder', 'edge', 'word', 'pr', 'ff', 'note', 'excel', 'chm', 'fs', 'ch', 'cad', 'chp']
const running = ['folder', 'pr', 'cad', 'chp']
</script>

<template>
  <div class="desktop">
    <div class="window">
      <header class="title">
        <div class="qa">
          <button class="app" aria-label="Application menu"><Ic n="logo" /></button>
          <button class="c16" aria-label="More"><Ic n="caret" /></button>
          <div class="tools">
            <button v-for="q in quick" :key="q" class="c30" :aria-label="q"><Ic :n="q" /></button>
            <button class="c14" aria-label="Undo list"><Ic n="caret" /></button>
            <button class="c30" aria-label="Redo"><Ic n="redo" /></button>
            <button class="c14" aria-label="Redo list"><Ic n="caret" /></button>
            <button class="c26" aria-label="Customize"><Ic n="custom" /></button>
            <button class="share"><Ic n="plane" /><span>Share</span></button>
          </div>
        </div>
        <h1><span>Autodesk AutoCAD 2024</span><span>Drawing1.dwg</span></h1>
        <div class="acct">
          <Ic n="tri" />
          <input type="search" placeholder="Type a keyword or phrase" aria-label="Search" />
          <button class="c30" aria-label="Search"><Ic n="search" /></button>
          <button class="sign"><Ic n="user" /><span>Sign In</span><Ic n="caret" /></button>
          <button class="c30" aria-label="Store"><Ic n="cart" /></button>
          <button class="c30" aria-label="Autodesk App"><Ic n="a360" /></button>
          <button class="c14" aria-label="App list"><Ic n="caret" /></button>
          <i class="vr"></i>
          <button class="c30" aria-label="Help"><Ic n="help" /></button>
          <button class="c16" aria-label="Help list"><Ic n="caret" /></button>
          <div class="wbtns">
            <button aria-label="Minimize"><Ic n="min" /></button>
            <button aria-label="Maximize"><Ic n="max" /></button>
            <button aria-label="Close"><Ic n="close" /></button>
          </div>
        </div>
      </header>

      <nav class="tabs">
        <button v-for="(t, k) in tabs" :key="t" :class="{ cur: !k }">{{ t }}</button>
        <button class="exp" aria-label="Minimize ribbon"><Ic n="wbox" /><Ic n="caret" /></button>
      </nav>

      <section class="ribbon">
        <div class="panel draw">
          <div class="body">
            <button class="big"><Ic n="line" /><span>Line</span></button>
            <button class="big"><Ic n="pline" /><span>Polyline</span></button>
            <button class="big"><Ic n="circle" /><span>Circle</span><Ic n="caret" /></button>
            <button class="big"><Ic n="arc" /><span>Arc</span><Ic n="caret" /></button>
            <template v-for="i in ['rect', 'ellipse', 'hatch']" :key="i">
              <button class="sm" :aria-label="i"><Ic :n="i" /></button>
              <button class="sm" :aria-label="i + ' list'"><Ic n="caret" /></button>
            </template>
          </div>
          <footer><span>Draw <Ic n="caretL" /></span></footer>
        </div>

        <div class="panel modify">
          <div class="body">
            <template v-for="(m, k) in modify" :key="m[0]">
              <button class="cmd"><Ic :n="m[1]" /><span>{{ m[0] }}</span><Ic v-if="m[2]" class="end" n="caret" /></button>
              <button v-if="m[2]" class="sm" :aria-label="side[(k - 2) / 3]"><Ic :n="side[(k - 2) / 3]" /></button>
            </template>
          </div>
          <footer><span>Modify <Ic n="caretL" /></span></footer>
        </div>

        <div class="panel anno">
          <div class="body">
            <button class="big"><Ic n="text" /><span>Text</span><Ic n="caret" /></button>
            <button class="big"><Ic n="dim" /><span>Dimension</span></button>
            <button class="sm" aria-label="Linear"><Ic n="linear" /></button>
            <button class="sm" aria-label="Linear list"><Ic n="caret" /></button>
            <button class="sm" aria-label="Leader"><Ic n="leader" /></button>
            <button class="sm" aria-label="Leader list"><Ic n="caret" /></button>
            <button class="sm" aria-label="Table"><Ic n="table" /></button>
          </div>
          <footer><span>Annotation <Ic n="caretL" /></span></footer>
        </div>

        <div class="panel layers">
          <div class="body">
            <button class="big"><Ic n="layerp" /><span>Layer<br />Properties</span></button>
            <div class="drop lay">
              <Ic n="bulb" /><Ic n="sun" /><Ic n="unlock" /><i class="sw"></i>
              <select aria-label="Layer"><option>0</option></select>
              <Ic class="end" n="caretL" />
            </div>
            <div class="row">
              <button v-for="k in 5" :key="k" :aria-label="'Layer tool ' + k"><Ic :n="'l' + k" /></button>
            </div>
            <div class="row">
              <button v-for="k in 5" :key="k" :aria-label="'Layer tool ' + (k + 5)"><Ic :n="'l' + (k + 5)" /></button>
            </div>
          </div>
          <footer><span>Layers <Ic n="caretL" /></span></footer>
        </div>

        <div class="panel block">
          <div class="body">
            <button class="big up"><Ic n="insert" /><span>Insert</span><Ic n="caret" /></button>
            <button class="sm" aria-label="Create block"><Ic n="blk1" /></button>
            <button class="sm r2" aria-label="Edit block"><Ic n="blk2" /></button>
            <button class="sm r3" aria-label="Edit attributes"><Ic n="blk3" /></button>
            <button class="sm r3" aria-label="Attribute list"><Ic n="caret" /></button>
          </div>
          <footer><span>Block <Ic n="caretL" /></span></footer>
        </div>

        <div class="panel props">
          <div class="body">
            <button class="big"><Ic n="match" /><span>Match<br />Properties</span></button>
            <i class="wheel"></i>
            <div class="drop"><i class="sw big-sw"></i><select aria-label="Colour"><option>ByLayer</option></select><Ic class="end" n="caretL" /></div>
            <Ic n="lw" />
            <div class="drop"><i class="rule"></i><select aria-label="Lineweight"><option>ByLayer</option></select><Ic class="end" n="caretL" /></div>
            <Ic n="lt" />
            <div class="drop"><i class="rule"></i><select aria-label="Linetype"><option>ByLayer</option></select><Ic class="end" n="caretL" /></div>
          </div>
          <footer><span>Properties <Ic n="caretL" /></span><button aria-label="Properties palette"><Ic n="launch" /></button></footer>
        </div>

        <div class="panel groups">
          <div class="body">
            <button class="big up"><Ic n="group" /><span>Group</span></button>
            <button class="sm" aria-label="Ungroup"><Ic n="grp1" /></button>
            <button class="sm" aria-label="Group edit"><Ic n="grp2" /></button>
            <button class="sm sel" aria-label="Group selection"><Ic n="grp3" /></button>
          </div>
          <footer><span>Groups <Ic n="caretL" /></span></footer>
        </div>

        <div class="panel utils">
          <div class="body">
            <button class="big"><Ic n="measure" /><span>Measure</span><Ic n="caret" /></button>
            <button class="sm" aria-label="Quick select"><Ic n="ut1" /></button>
            <button class="sm" aria-label="Select all"><Ic n="ut2" /></button>
            <button class="sm" aria-label="Calculator"><Ic n="ut3" /></button>
          </div>
          <footer><span>Utilities <Ic n="caretL" /></span></footer>
        </div>

        <div class="panel clip">
          <div class="body">
            <button class="big"><Ic n="paste" /><span>Paste</span><Ic n="caret" /></button>
            <button class="sm" aria-label="Cut"><Ic n="cut" /></button>
            <button class="sm" aria-label="Cut list"><Ic n="caret" /></button>
            <button class="sm" aria-label="Copy clip"><Ic n="copyc" /></button>
            <button class="sm" aria-label="Copy list"><Ic n="caret" /></button>
          </div>
          <footer><span>Clipboard</span></footer>
        </div>

        <div class="panel view">
          <div class="body">
            <button class="big"><Ic n="base" /><span>Base</span><Ic n="caret" /></button>
          </div>
          <footer><span>View <Ic n="caretL" /></span><button aria-label="View settings"><Ic n="launch" /></button></footer>
        </div>
      </section>

      <nav class="files">
        <button class="burger" aria-label="File menu"><Ic n="burger" /></button>
        <Ic n="slash" />
        <button class="start">Start</button>
        <button class="cur"><span>Drawing1</span><Ic n="x" /></button>
        <button class="add" aria-label="New drawing"><Ic n="plus" /></button>
        <Ic n="slash" />
      </nav>

      <main class="canvas">
        <svg class="sheet">
          <circle cx="1268" cy="352" r="29" fill="#0000f0" />
          <g stroke="#b0b0b0" stroke-dasharray="1 4" fill="none">
            <path d="M470 328.500H1268M470.500 329V390" />
          </g>
          <path d="M470 390.500H1268" stroke="#fff" />
          <path d="M472 390.500H1268" stroke="#999" stroke-dasharray="1 4" />
          <circle cx="470" cy="328" r="2" fill="#666" /><circle cx="1268" cy="328" r="2" fill="#888" /><circle cx="1268" cy="390" r="2" fill="#aaa" />
          <path d="M1268.500 121V581M1038 351.500H1499" stroke="#fff" />
          <path d="M1269 354V372L1273 368.500L1276 374L1279 373L1276.500 367H1282Z" fill="#fff" />
          <g stroke="#fff" fill="none">
            <path d="M20.500 669V731.500H83" /><rect x="16.500" y="726.500" width="9" height="10" />
          </g>
          <text x="29" y="665" text-anchor="middle">Y</text>
          <text x="94" y="730" text-anchor="middle">X</text>
        </svg>
        <div class="vp"><span>[−]</span><span>[Top]</span><span>[2D Wireframe]</span>
          <div><button aria-label="Minimize view"><Ic n="wmin" /></button><button aria-label="Restore view"><Ic n="wres" /></button><button aria-label="Close view"><Ic n="wx" /></button></div>
        </div>
        <input class="dist" value="55" aria-label="Distance" /><i class="cursor"></i>
        <span class="angle">0°</span>
        <div class="compass">
          <b class="n">N</b><b class="w">W</b><button>TOP</button><b class="e">E</b><b class="s">S</b>
        </div>
        <button class="wcs">WCS <Ic n="caretW" /></button>
        <div class="navbar"><Ic n="nav" /></div>
        <div class="cmdwin">
          <p><span class="dim">LINE</span></p>
          <p><span>Specify first point:</span></p>
          <div class="cmdline">
            <div class="cl"><Ic n="grip" /><button aria-label="Close"><Ic n="cx" /></button><button aria-label="Customize"><Ic n="wrench" /></button></div>
            <div class="prompt"><Ic n="cline" /><Ic n="caretD" /><span class="msg"><b>LINE</b> Specify next point or [<button><em>U</em>ndo</button>]:&nbsp; &lt;Ortho on&gt;</span><Ic class="end" n="caretU" /></div>
          </div>
        </div>
      </main>

      <footer class="status">
        <div class="lays">
          <button class="burger" aria-label="Layout menu"><Ic n="burger" /></button>
          <button class="cur"><span>Model</span></button>
          <button class="lay1">Layout1</button><Ic n="slash" />
          <button class="lay2">Layout2</button><Ic n="slash" />
          <button class="add" aria-label="New layout"><Ic n="plus" /></button><Ic n="slash" />
        </div>
        <div class="cells">
          <div v-for="(g, a) in status" :key="a" class="grp">
            <button v-for="(c, b) in g" :key="b" :class="{ on: c.on, s: c.s, r: c.r, e: c.e }" :style="{ width: c.w + 'px' }" :aria-label="c.t || c.i || 'list'">
              <Ic v-if="c.i" :n="c.i" /><Ic v-else-if="c.c" n="caretL" />{{ c.t }}
            </button>
          </div>
        </div>
      </footer>
    </div>

    <div class="taskbar">
      <button v-for="a in apps" :key="a" :class="{ run: running.includes(a), act: a === 'cad' }" :aria-label="a"><Ic :n="a" /></button>
      <div class="tray">
        <Ic n="up" /><Ic n="mic" /><Ic n="bat" /><Ic n="meet" />
        <div class="clock">7:41 PM<br />9/20/2025</div>
        <Ic n="notif" />
        <i class="peek"></i>
      </div>
    </div>
  </div>
</template>

<style>
body {
  background: #222b31;
}
</style>

<style scoped>
.desktop {
  min-height: 100vh;
  display: flex;
  flex-direction: column;
  background:
    linear-gradient(#5a9bdc 0, #62a5de 240px, #b9e4dc 500px, #d9d8c4 560px, #d8c3b4 676px, #6d8797 680px, #5f8a94 700px, #b4cfdb 730px, #7ba3bd 765px, #d5d2c4 770px, #9fd4d2 900px, #7fc4d4) left / 3px 100% no-repeat,
    linear-gradient(#2b78bd 0, #2b78bd 240px, #3f9bb8 420px, #83d3d4 560px, #5db5c0 660px, #2a7a94 700px, #59b8cc 900px, #6fc3e0);
  font-family: "Open Sans", "Noto Sans", sans-serif;
  font-size: 14px;
  line-height: 20px;
  color: #e8e8e8;
}
* {
  box-sizing: border-box;
}
button, input, select {
  font: inherit;
  color: inherit;
  background: none;
  border: 0;
  padding: 0;
  margin: 0;
}
button {
  display: flex;
  align-items: center;
  justify-content: center;
  white-space: nowrap;
}
.ic {
  display: block;
  flex: none;
}
.window {
  flex: 1;
  display: flex;
  flex-direction: column;
  margin: 0 3px;
  background: #222b31;
  border-top: 1px solid #3b8fae;
  border-bottom: 1px solid #2f87a5;
  box-shadow: inset 1px 0 #185069, inset -1px 0 #185069;
}
.title {
  display: flex;
  align-items: center;
  height: 44px;
  padding-bottom: 5px;
}
.qa, .tools, .acct, .wbtns {
  display: flex;
  align-items: center;
}
.app {
  margin-left: 18px;
}
.tools {
  margin-left: 5px;
}
.c14 { width: 14px; }
.c16 { width: 16px; }
.c26 { width: 26px; }
.c30 { width: 30px; }
.share {
  gap: 4px;
  color: #86c4ee;
}
h1 {
  flex: 1;
  display: flex;
  justify-content: center;
  gap: 18px;
  margin: 0;
  font-size: 14px;
  font-weight: 400;
}
.acct input {
  width: 223px;
  height: 26px;
  margin-left: 8px;
  padding: 0 4px;
  background: #45505c;
  font-style: italic;
}
.acct input::placeholder {
  color: #b4bac1;
  opacity: 1;
}
.sign {
  gap: 6px;
  padding: 0 8px 0 4px;
  width: 152px;
  justify-content: flex-start;
}
.sign .ic:last-child {
  margin-left: auto;
}
.vr {
  width: 1px;
  height: 22px;
  margin: 0 6px;
  background: #4c555d;
}
.wbtns {
  margin-left: 21px;
}
.wbtns button {
  width: 58px;
  height: 30px;
}
.tabs {
  display: flex;
  gap: 1px;
  height: 25px;
  padding-left: 8px;
  color: #b3b8bd;
}
.tabs button {
  padding: 0 12px;
}
.tabs .cur {
  background: #3d4551;
  color: #fff;
}
.tabs .exp {
  gap: 4px;
  padding-left: 24px;
}
.ribbon {
  display: flex;
  height: 124px;
  margin: 0 5px;
  background: #3d4551;
}
.panel {
  display: flex;
  flex-direction: column;
  padding-top: 5px;
  border-right: 1px solid #252d36;
}
.panel:last-child {
  border: 0;
}
.body {
  display: grid;
  grid-template-rows: repeat(3, 31px);
  align-items: center;
}
.panel footer {
  display: flex;
  height: 26px;
  padding-top: 3px;
  align-items: center;
}
.panel footer span {
  flex: 1;
  display: flex;
  align-items: center;
  justify-content: center;
  gap: 8px;
}
.panel footer button {
  width: 16px;
}
.big {
  grid-row: 1 / 4;
  align-self: start;
  flex-direction: column;
  padding-top: 3px;
}
.big span {
  margin-top: 5px;
}
.big.up {
  padding-top: 2px;
}
.big.up span {
  margin-top: 4px;
}
.big span + .ic {
  margin-top: 4px;
}
.draw { flex: 278 1 0; }
.draw .body { grid-template-columns: 53px 52px 72px 42px 38px 9px; }
.modify { flex: 316 1 0; }
.modify .body { grid-template-columns: 91px 88px 81px 48px; padding-left: 7px; }
.anno { flex: 184 1 0; }
.anno .body { grid-template-columns: 58px 74px 34px 12px; padding-left: 1px; }
.layers { flex: 341 1 0; }
.layers .body { grid-template-columns: 78px 1fr; padding-right: 2px; }
.block { flex: 100 1 0; }
.block .body { grid-template-columns: 54px 22px 23px; padding-left: 1px; }
.props { flex: 277 1 0; }
.props .body { grid-template-columns: 78px 24px 1fr; padding: 0 2px 0 1px; }
.groups { flex: 85 1 0; }
.groups .body { grid-template-columns: 50px 30px; padding-left: 1px; }
.utils { flex: 121 1 0; }
.utils .body { grid-template-columns: 88px 26px; }
.clip { flex: 113 1 0; }
.clip .body { grid-template-columns: 66px 26px 14px; }
.view { flex: 89 1 0; }
.view .body { grid-template-columns: 78px; }
.view footer { padding-right: 12px; }
.r2 { grid-row: 2; grid-column: 2; }
.r3 { grid-row: 3; }
.cmd {
  justify-content: flex-start;
  gap: 6px;
}
.end {
  margin-left: auto;
}
.drop {
  position: relative;
  display: flex;
  align-items: center;
  height: 28px;
  padding: 0 1px 0 3px;
  background: #4b5768;
  border: 1px solid #27303b;
}
.drop select {
  flex: 1;
  height: 26px;
  appearance: none;
  margin-left: 5px;
}
.drop .end {
  pointer-events: none;
}
.lay {
  gap: 2px;
}
.lay select {
  margin-left: 3px;
}
.sw {
  width: 18px;
  height: 18px;
  margin-left: 4px;
  background: #fff;
}
.big-sw {
  width: 20px;
  height: 20px;
}
.rule {
  width: 80px;
  height: 1px;
  margin-left: 4px;
  background: #fff;
}
.rule + select {
  margin-left: 2px;
}
.row {
  display: flex;
}
.row button {
  width: 30px;
}
.wheel {
  width: 20px;
  height: 20px;
  margin-left: 1px;
  border-radius: 50%;
  background: conic-gradient(#f5a53a 0 12%, #ef5a4d 12% 30%, #c84bd0 30% 42%, #6f4be8 42% 58%, #3f9be8 58% 72%, #43c987 72% 88%, #c9d94a 88%);
}
.sel {
  height: 28px;
  background: #3f5a72;
  border: 1px solid #7ab6e0;
}
.files {
  display: flex;
  align-items: center;
  height: 38px;
  margin: 0 3px;
  padding-top: 3px;
  border-bottom: 5px solid #3d4551;
}
.burger {
  margin: 0 12px 0 21px;
}
.files .cur, .lays .cur {
  align-self: stretch;
  gap: 12px;
  background: #3d4551;
  font-weight: 700;
  color: #fff;
}
.files .start {
  margin: 0 10px;
}
.files .cur {
  width: 124px;
  padding-left: 4px;
  clip-path: polygon(11px 0, 100% 0, calc(100% - 11px) 100%, 0 100%);
}
.files .add {
  margin: 0 12px;
}
.canvas {
  flex: 1;
  position: relative;
  min-height: 600px;
  margin: 0 4px 0 3px;
  background: #000;
}
.sheet {
  position: absolute;
  inset: 0;
  width: 100%;
  height: 100%;
  font-family: Lato, sans-serif;
  font-size: 21px;
  font-weight: 300;
  fill: #fff;
}
.vp {
  position: relative;
  display: flex;
  gap: 2px;
  padding: 6px 12px 0 5px;
}
.vp div {
  display: flex;
  gap: 11px;
  margin-left: auto;
}
.dist {
  position: absolute;
  left: 835px;
  top: 316px;
  width: 64px;
  height: 26px;
  padding: 0 5px 2px;
  background: #fff;
  border: 1px solid #555;
  color: #222;
}
.cursor {
  position: absolute;
  left: 857px;
  top: 318px;
  width: 1px;
  height: 20px;
  background: #000;
}
.angle {
  position: absolute;
  left: 1253px;
  top: 422px;
  width: 29px;
  height: 24px;
  padding: 2px 5px;
  background: #17114f;
  color: #c5c5dd;
}
.compass {
  position: absolute;
  right: 24px;
  top: 52px;
  width: 128px;
  height: 128px;
  border: 15px solid #2b2b2b;
  border-radius: 50%;
  display: grid;
  place-items: center;
  font-family: "Liberation Sans", sans-serif;
  font-size: 21px;
  color: #b0b0b0;
}
.compass button {
  width: 56px;
  height: 56px;
  background: #a9abab;
  border: 11px solid #b2b2b2;
  color: #4a4e55;
  font-size: 13px;
  font-weight: 700;
}
.compass b {
  position: absolute;
}
.n { top: -20px; }
.s { bottom: -21px; }
.w { left: -21px; }
.e { right: -18px; }
.wcs {
  position: absolute;
  right: 60px;
  top: 208px;
  width: 56px;
  height: 20px;
  gap: 8px;
  background: #76767d;
  border: 1px solid #8a8a90;
  border-radius: 5px;
  font-family: "Liberation Sans", sans-serif;
  font-size: 13px;
  color: #48484c;
}
.navbar {
  position: absolute;
  right: 4px;
  top: 260px;
  width: 40px;
  height: 259px;
  background: #3f3f3f;
  border-radius: 4px;
}
.cmdwin {
  position: absolute;
  left: 383px;
  right: 381px;
  bottom: 0;
  font-family: "Liberation Mono", monospace;
  font-size: 17px;
}
.cmdwin p {
  display: flex;
  align-items: flex-start;
  margin: 0;
  padding-left: 79px;
  height: 24px;
}
.cmdwin p + p {
  height: 22px;
}
.cmdwin p span {
  height: 18px;
  line-height: 18px;
  padding: 0 1px;
  background: #5c5c5c;
  border-radius: 2px;
}
.cmdwin p .dim {
  background: #414141;
  color: #b0b0b0;
}
.cmdline {
  display: flex;
  height: 33px;
}
.cl {
  display: flex;
  align-items: center;
  width: 72px;
  padding: 0 5px;
  background: #2c303a;
}
.cl button {
  width: 24px;
}
.cl button + button {
  width: 36px;
}
.prompt {
  flex: 1;
  display: flex;
  align-items: center;
  gap: 4px;
  padding: 1px 6px 0 4px;
  background: #fff;
  border-radius: 0 3px 3px 0;
  color: #111;
}
.msg {
  margin-left: 4px;
  white-space: nowrap;
}
.msg button {
  display: inline;
  background: #cfcfcf;
  border-radius: 3px;
}
.msg em {
  font-style: normal;
  color: #2a2ab0;
}
.status {
  display: flex;
  justify-content: space-between;
  height: 45px;
  margin: 0 4px 0 3px;
  border-top: 5px solid #3d4551;
}
.lays {
  display: flex;
  align-items: center;
  height: 30px;
}
.lays .cur {
  width: 85px;
  clip-path: polygon(11px 0, 100% 0, calc(100% - 11px) 100%, 0 100%);
}
.lay1 { margin: 0 11px 0 9px; }
.lay2 { margin: 0 9px; }
.lays .add { margin: 0 13px; }
.cells {
  display: flex;
  gap: 3px;
  margin: 2px 2px 0 0;
  height: 30px;
}
.grp {
  display: flex;
}
.grp button {
  background: #3d4551;
}
.grp .s {
  margin-left: 2px;
}
.grp .r {
  justify-content: flex-end;
  padding-right: 6px;
}
.grp .e {
  justify-content: flex-end;
}
.grp .on {
  background: #5d8ebb;
}
.taskbar {
  display: flex;
  height: 50px;
  background: linear-gradient(90deg, #26353a, #283837 40%, #283635 58%, #22303a 66%, #2b2a2a 75%, #203033 82%, #1f2f31);
}
.taskbar button {
  width: 62px;
  padding-top: 3px;
  border-bottom: 3px solid transparent;
}
.taskbar button:first-child {
  width: 60px;
}
.taskbar .run {
  background: linear-gradient(#76b9ed, #76b9ed) center bottom / 51px 3px no-repeat border-box;
}
.taskbar .act {
  background: linear-gradient(#76b9ed, #76b9ed) center bottom / 60px 3px no-repeat border-box, linear-gradient(#54605f, #54605f) center / 60px 100% no-repeat;
}
.tray {
  display: flex;
  align-items: center;
  margin-left: auto;
  gap: 13px;
}
.clock {
  margin: 0 13px 0 1px;
  line-height: 22px;
  text-align: center;
}
.peek {
  align-self: stretch;
  width: 6px;
  margin-left: -3px;
  border-left: 1px solid #67767a;
}
</style>
